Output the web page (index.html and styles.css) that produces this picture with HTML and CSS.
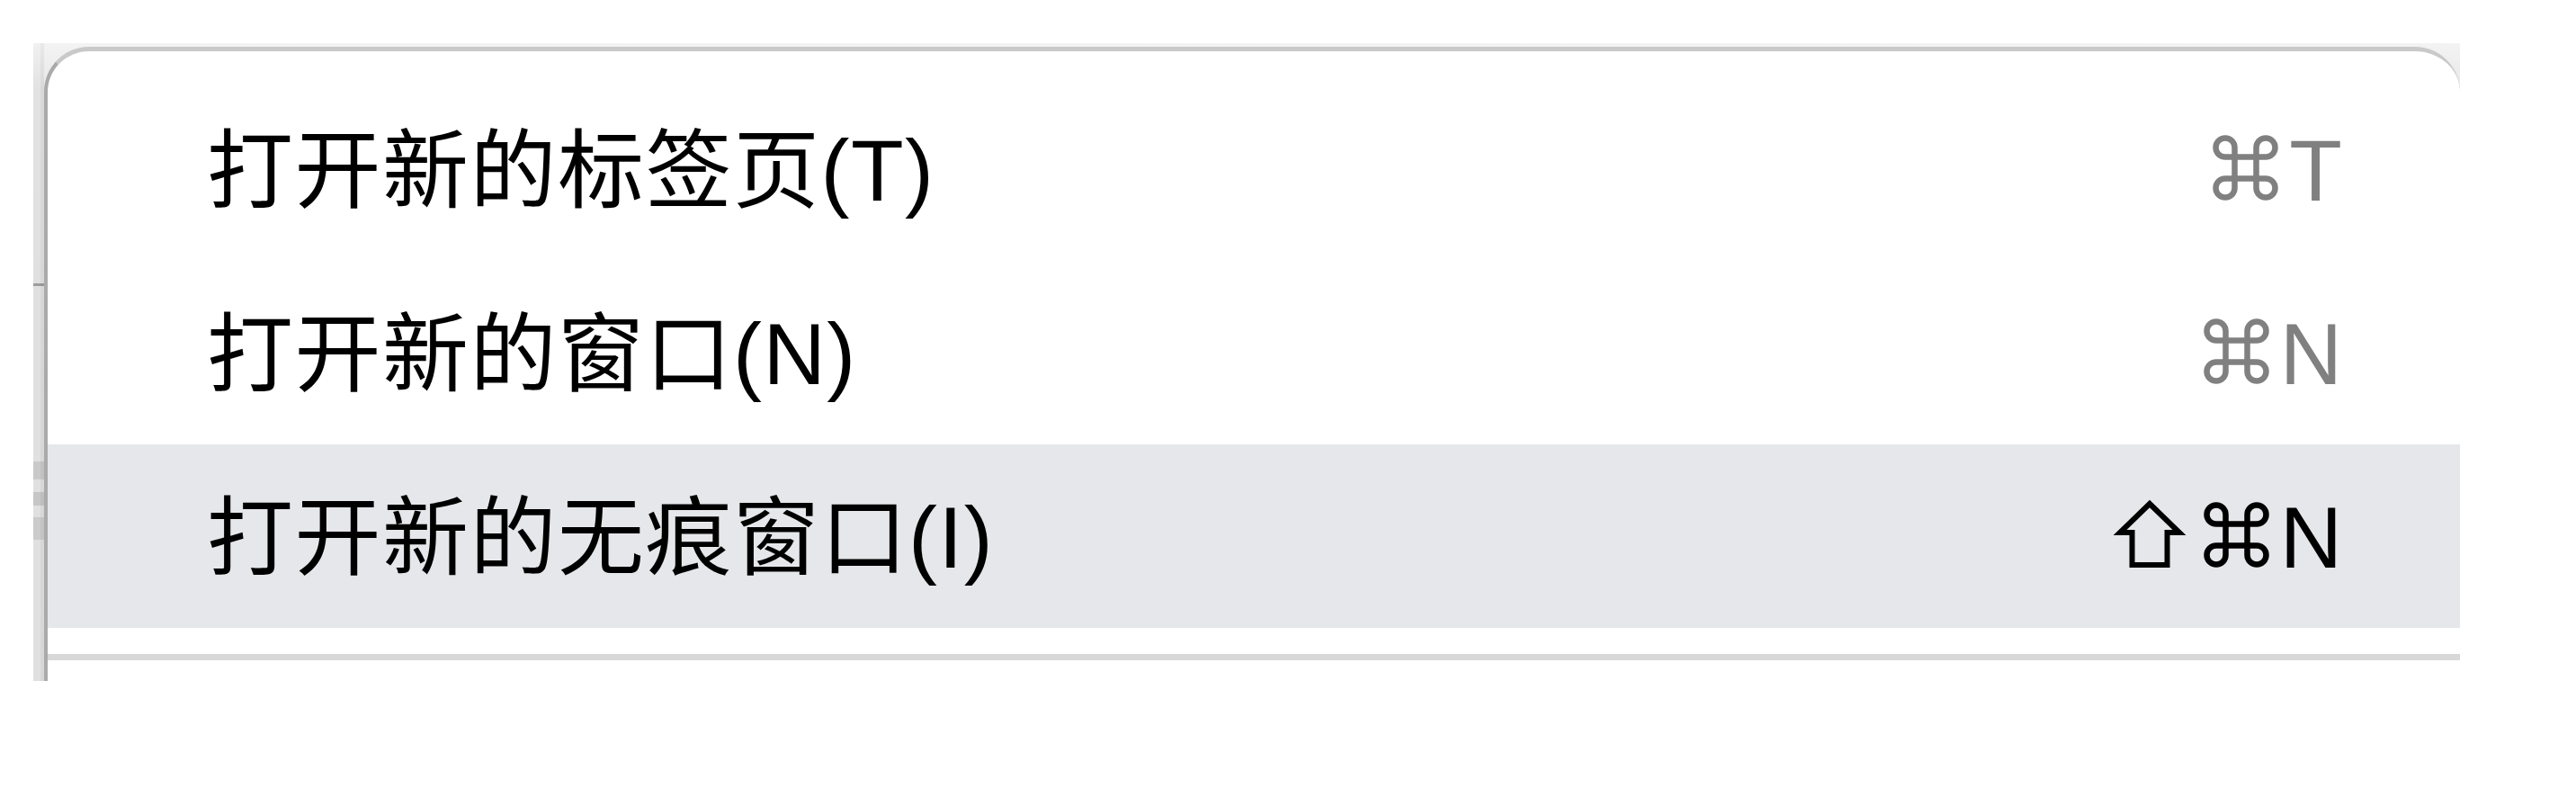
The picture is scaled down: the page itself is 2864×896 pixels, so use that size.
FILE: index.html
```html
<!DOCTYPE html>
<html lang="zh-CN">
<head>
<meta charset="utf-8">
<title>菜单</title>
<link rel="stylesheet" href="styles.css">
</head>
<body>
<div class="frame">
  <div class="strip"></div>
  <div class="menu">
    <div class="item">
      <span class="label">打开新的标签页(T)</span>
      <span class="keys dim"><svg class="cmd" viewBox="0 0 73 73" width="73" height="73"><path d="M24.5 24.5V14A10.5 10.5 0 1 0 14 24.5H59A10.5 10.5 0 1 0 48.5 14V59A10.5 10.5 0 1 0 59 48.5H14A10.5 10.5 0 1 0 24.5 59Z"/></svg><span class="key">T</span></span>
    </div>
    <div class="item">
      <span class="label">打开新的窗口(N)</span>
      <span class="keys dim"><svg class="cmd" viewBox="0 0 73 73" width="73" height="73"><path d="M24.5 24.5V14A10.5 10.5 0 1 0 14 24.5H59A10.5 10.5 0 1 0 48.5 14V59A10.5 10.5 0 1 0 59 48.5H14A10.5 10.5 0 1 0 24.5 59Z"/></svg><span class="key">N</span></span>
    </div>
    <div class="item active">
      <span class="label">打开新的无痕窗口(I)</span>
      <span class="keys"><svg class="shift" viewBox="0 0 80 76" width="80" height="76"><path d="M40 5L73 37H59.5V73H20.5V37H7Z"/></svg><svg class="cmd" viewBox="0 0 73 73" width="73" height="73"><path d="M24.5 24.5V14A10.5 10.5 0 1 0 14 24.5H59A10.5 10.5 0 1 0 48.5 14V59A10.5 10.5 0 1 0 59 48.5H14A10.5 10.5 0 1 0 24.5 59Z"/></svg><span class="key">N</span></span>
    </div>
    <div class="separator"></div>
  </div>
</div>
</body>
</html>
```

FILE: styles.css
```css
html, body {
  margin: 0;
  padding: 0;
  background: #ffffff;
}

body {
  width: 2864px;
  height: 896px;
  overflow: hidden;
  font-family: "Liberation Sans", "Noto Sans CJK SC", sans-serif;
}

.frame {
  margin: 48px 0 0 37px;
  width: 2698px;
  height: 709px;
  display: flex;
  background: linear-gradient(to bottom, #f3f3f3 0, #e6e6e6 60px, #e0e0e0 100px);
}

.strip {
  flex: none;
  width: 12px;
  background:
    linear-gradient(to right, rgba(0,0,0,0) 0, rgba(0,0,0,0) 8px, rgba(0,0,0,0.04) 8px),
    linear-gradient(to bottom,
      #f1f1f1 0, #e2e2e2 50px, #e0e0e0 267px,
      #9d9d9d 267px, #9d9d9d 270px,
      #e0e0e0 270px, #e0e0e0 465px,
      #c9c9c9 465px, #c9c9c9 485px,
      #e0e0e0 485px, #e0e0e0 499px,
      #c6c6c6 499px, #c6c6c6 514px,
      #e0e0e0 514px, #e0e0e0 527px,
      #cbcbcb 527px, #cbcbcb 552px,
      #e0e0e0 552px);
}

.menu {
  flex: 1;
  margin-top: 4px;
  background: #ffffff;
  border-top: 5px solid #c9c9c9;
  border-left: 4px solid #aaaaaa;
  border-radius: 50px 50px 0 0;
  padding-top: 29px;
  display: flex;
  flex-direction: column;
}

.item {
  height: 204px;
  box-sizing: border-box;
  padding: 4px 131px 0 177px;
  display: flex;
  justify-content: space-between;
  align-items: flex-start;
  font-size: 96px;
  line-height: 200px;
  color: #000000;
}

.item.active {
  background: #e6e7ea;
}

.label {
  letter-spacing: 1.5px;
  white-space: nowrap;
}

.keys {
  white-space: nowrap;
  color: #000000;
}

.keys.dim {
  color: #808080;
}

.keys svg {
  vertical-align: baseline;
  overflow: visible;
  fill: none;
  stroke: currentColor;
}

.cmd {
  stroke-width: 6.5;
  margin-right: 12px;
}

.shift {
  stroke-width: 6;
  stroke-linejoin: miter;
  margin-right: 20px;
}

.separator {
  margin-top: 29px;
  height: 7px;
  background: #d8d8d8;
}
```
